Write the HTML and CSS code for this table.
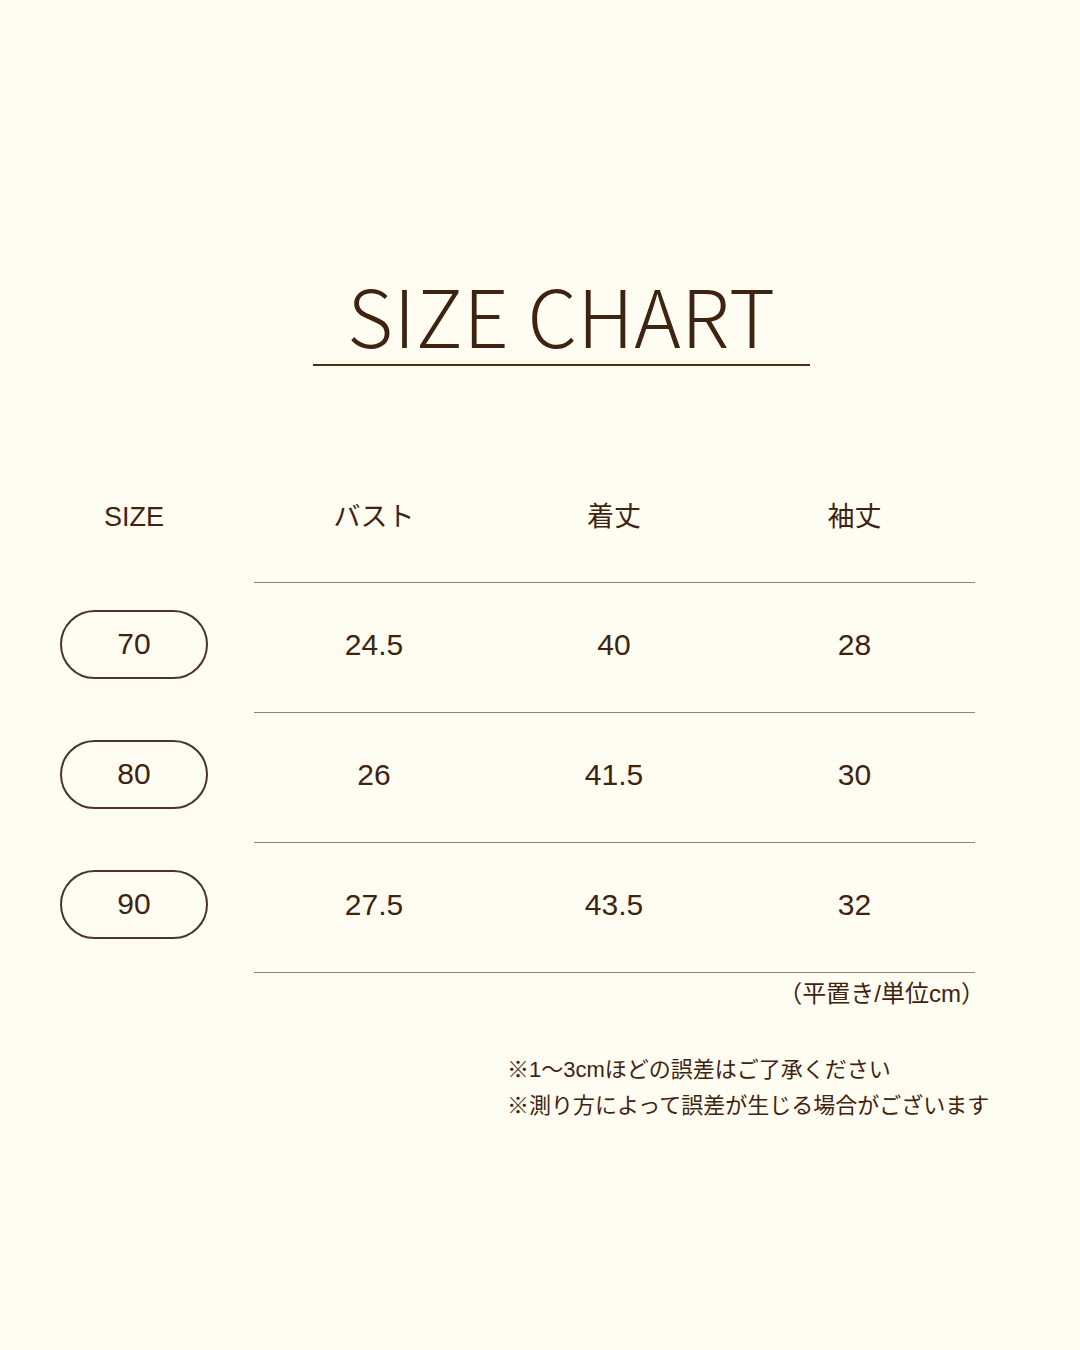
FILE: index.html
```html
<!DOCTYPE html>
<html lang="ja">
<head>
<meta charset="utf-8">
<link rel="stylesheet" href="styles.css">
</head>
<body>
<div class="page">
  <div class="title-block">
    <h1 class="title">SIZE CHART</h1>
    <div class="title-rule"></div>
  </div>
  <div class="chart">
    <div class="row head">
      <div class="cell size">SIZE</div>
      <div class="cell">バスト</div>
      <div class="cell">着丈</div>
      <div class="cell">袖丈</div>
    </div>
    <div class="row">
      <div class="cell size"><span class="pill">70</span></div>
      <div class="cell">24.5</div>
      <div class="cell">40</div>
      <div class="cell">28</div>
    </div>
    <div class="row">
      <div class="cell size"><span class="pill">80</span></div>
      <div class="cell">26</div>
      <div class="cell">41.5</div>
      <div class="cell">30</div>
    </div>
    <div class="row">
      <div class="cell size"><span class="pill">90</span></div>
      <div class="cell">27.5</div>
      <div class="cell">43.5</div>
      <div class="cell">32</div>
    </div>
    <div class="unit">（平置き/単位cm）</div>
  </div>
  <div class="notes">
    <p>※1〜3cmほどの誤差はご了承ください</p>
    <p>※測り方によって誤差が生じる場合がございます</p>
  </div>
</div>
</body>
</html>
```
FILE: styles.css
```css
html, body {
  margin: 0;
  padding: 0;
}
body {
  background: #fffdf2;
  color: #3e2410;
  font-family: "Liberation Sans", "Noto Sans CJK JP", sans-serif;
  width: 1080px;
  height: 1350px;
  overflow: hidden;
}
.page {
  display: flex;
  flex-direction: column;
}
.title-block {
  margin-top: 264px;
  margin-left: 313px;
  width: 497px;
  display: flex;
  flex-direction: column;
  align-items: center;
}
.title {
  margin: 0;
  font-family: "Noto Sans CJK JP", "Noto Sans", sans-serif;
  font-weight: 300;
  font-size: 79px;
  line-height: 100px;
  letter-spacing: 0.6px;
}
.title-rule {
  width: 497px;
  height: 2px;
  background: #4a2e18;
}
.chart {
  margin-top: 87px;
  margin-left: 60px;
  width: 915px;
  display: flex;
  flex-direction: column;
}
.row {
  display: grid;
  grid-template-columns: 194px 240px 240px 241px;
  height: 130px;
  align-items: center;
  position: relative;
}
.row::after {
  content: "";
  position: absolute;
  left: 194px;
  right: 0;
  bottom: 0;
  height: 1px;
  background: #8a8580;
}
.cell {
  text-align: center;
  font-size: 30px;
  line-height: 1;
  margin-top: -6px;
}
.head .cell {
  font-size: 27px;
  margin-top: -2px;
}
.cell.size {
  width: 148px;
  display: flex;
  justify-content: center;
}
.pill {
  display: flex;
  align-items: center;
  justify-content: center;
  width: 144px;
  height: 65px;
  border: 2px solid #4a3528;
  border-radius: 35px;
  font-size: 30px;
  margin-top: -2px;
}
.unit {
  align-self: flex-end;
  font-size: 24px;
  margin-top: 1px;
  margin-right: -10px;
}
.notes {
  margin-top: 43px;
  margin-left: 507px;
  font-size: 22px;
  line-height: 36px;
}
.notes p {
  margin: 0;
}
```
